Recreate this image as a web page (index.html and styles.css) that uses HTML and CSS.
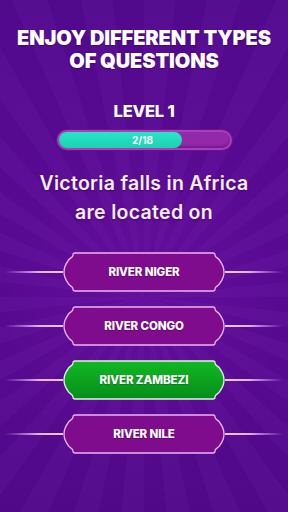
FILE: index.html
```html
<!DOCTYPE html>
<html>
<head>
<meta charset="utf-8">
<link rel="stylesheet" href="styles.css">
</head>
<body>
<div class="screen">
  <h1 class="title">ENJOY DIFFERENT TYPES<br>OF QUESTIONS</h1>
  <div class="level">LEVEL 1</div>
  <div class="track">
    <div class="fill" style="width: 72.5%"></div>
    <span class="count">2/18</span>
  </div>
  <p class="question">Victoria falls in Africa<br>are located on</p>
  <div class="answers">
    <div class="row">
      <span class="line left"></span>
      <div class="btn">
        <svg class="shape" width="162" height="40" viewBox="0 0 162 40"><path d="M12,1 H150 Q152,1 152,3 C152,6 156,6 157,9 C160,13 161,17 161,20 C161,23 160,27 157,31 C156,34 152,34 152,37 Q152,39 150,39 H12 Q10,39 10,37 C10,34 6,34 5,31 C2,27 1,23 1,20 C1,17 2,13 5,9 C6,6 10,6 10,3 Q10,1 12,1 Z"/></svg>
        <span class="label">RIVER NIGER</span>
      </div>
      <span class="line right"></span>
    </div>
    <div class="row">
      <span class="line left"></span>
      <div class="btn">
        <svg class="shape" width="162" height="40" viewBox="0 0 162 40"><path d="M12,1 H150 Q152,1 152,3 C152,6 156,6 157,9 C160,13 161,17 161,20 C161,23 160,27 157,31 C156,34 152,34 152,37 Q152,39 150,39 H12 Q10,39 10,37 C10,34 6,34 5,31 C2,27 1,23 1,20 C1,17 2,13 5,9 C6,6 10,6 10,3 Q10,1 12,1 Z"/></svg>
        <span class="label">RIVER CONGO</span>
      </div>
      <span class="line right"></span>
    </div>
    <div class="row">
      <span class="line left"></span>
      <div class="btn correct">
        <svg class="shape" width="162" height="40" viewBox="0 0 162 40">
          <defs><linearGradient id="g" x1="0" y1="0" x2="0" y2="1"><stop offset="0" stop-color="#12b825"/><stop offset="1" stop-color="#058e19"/></linearGradient></defs>
          <path fill="url(#g)" d="M12,1 H150 Q152,1 152,3 C152,6 156,6 157,9 C160,13 161,17 161,20 C161,23 160,27 157,31 C156,34 152,34 152,37 Q152,39 150,39 H12 Q10,39 10,37 C10,34 6,34 5,31 C2,27 1,23 1,20 C1,17 2,13 5,9 C6,6 10,6 10,3 Q10,1 12,1 Z"/></svg>
        <span class="label">RIVER ZAMBEZI</span>
      </div>
      <span class="line right"></span>
    </div>
    <div class="row">
      <span class="line left"></span>
      <div class="btn">
        <svg class="shape" width="162" height="40" viewBox="0 0 162 40"><path d="M12,1 H150 Q152,1 152,3 C152,6 156,6 157,9 C160,13 161,17 161,20 C161,23 160,27 157,31 C156,34 152,34 152,37 Q152,39 150,39 H12 Q10,39 10,37 C10,34 6,34 5,31 C2,27 1,23 1,20 C1,17 2,13 5,9 C6,6 10,6 10,3 Q10,1 12,1 Z"/></svg>
        <span class="label">RIVER NILE</span>
      </div>
      <span class="line right"></span>
    </div>
  </div>
</div>
</body>
</html>
```

FILE: styles.css
```css
* { box-sizing: border-box; }
html, body { margin: 0; padding: 0; }
body {
  width: 288px;
  height: 512px;
  overflow: hidden;
  font-family: Inter, "Noto Sans", sans-serif;
  color: #fff;
}
.screen {
  width: 288px;
  height: 512px;
  display: flex;
  flex-direction: column;
  align-items: center;
  background:
    radial-gradient(ellipse 70% 50% at 50% 58%, rgba(125, 25, 175, 0.3), rgba(0,0,0,0) 70%),
    repeating-conic-gradient(from 0deg at 50% 58%, rgba(255,255,255,0.018) 0deg 6deg, rgba(0,0,0,0.02) 6deg 12deg),
    linear-gradient(180deg, #53098f 0%, #5a0a95 40%, #590a93 70%, #52088b 100%);
}
.title {
  margin: 27px 0 0;
  font-size: 20px;
  line-height: 23px;
  font-weight: 900;
  text-align: center;
  letter-spacing: -0.1px;
  text-shadow: 0 1px 1px rgba(40, 0, 60, 0.4);
}
.level {
  margin-top: 28px;
  font-size: 16.5px;
  line-height: 20px;
  font-weight: 800;
  letter-spacing: -0.2px;
}
.track {
  position: relative;
  margin-top: 9px;
  width: 175px;
  height: 20px;
  border-radius: 10px;
  background: #9228aa;
  border: 2px solid #a73fbc;
  box-shadow: 0 0 0 1px #6a128a, inset 0 -2px 2px rgba(90, 10, 110, 0.5);
}
.fill {
  height: 16px;
  border-radius: 8px;
  background: linear-gradient(180deg, #2ce3c6, #19d3b3);
}
.count {
  position: absolute;
  left: 0;
  right: 0;
  top: 0;
  line-height: 16px;
  text-align: center;
  font-size: 10px;
  font-weight: 700;
  margin-left: -3px;
}
.question {
  margin: 19px 0 0;
  font-size: 19.5px;
  line-height: 29px;
  font-weight: 600;
  letter-spacing: 0.3px;
  text-align: center;
  color: #f6ecfa;
  text-shadow: 0 1px 2px rgba(50, 0, 70, 0.6);
}
.answers {
  margin-top: 25px;
  display: flex;
  flex-direction: column;
  gap: 14px;
  width: 288px;
}
.row {
  display: flex;
  align-items: center;
  height: 40px;
}
.line {
  flex: 1;
  height: 1.5px;
}
.line.left {
  margin-left: 5px;
  background: linear-gradient(90deg, rgba(200,140,235,0), #e3b6f3 60%, #eec6f8);
}
.line.right {
  margin-right: 5px;
  background: linear-gradient(270deg, rgba(200,140,235,0), #e3b6f3 60%, #eec6f8);
}
.btn {
  position: relative;
  width: 162px;
  height: 40px;
  display: flex;
  align-items: center;
  justify-content: center;
}
.shape {
  position: absolute;
  left: 0;
  top: 0;
}
.shape path {
  fill: #7f0b8d;
  stroke: #eab6f2;
  stroke-width: 1.3;
}
.correct .shape path {
  fill: url(#g);
  stroke: #dff5e0;
}
.label {
  position: relative;
  font-size: 11.5px;
  font-weight: 800;
  letter-spacing: -0.1px;
  text-shadow: 0 1px 1px rgba(40,0,50,0.3);
}
```
